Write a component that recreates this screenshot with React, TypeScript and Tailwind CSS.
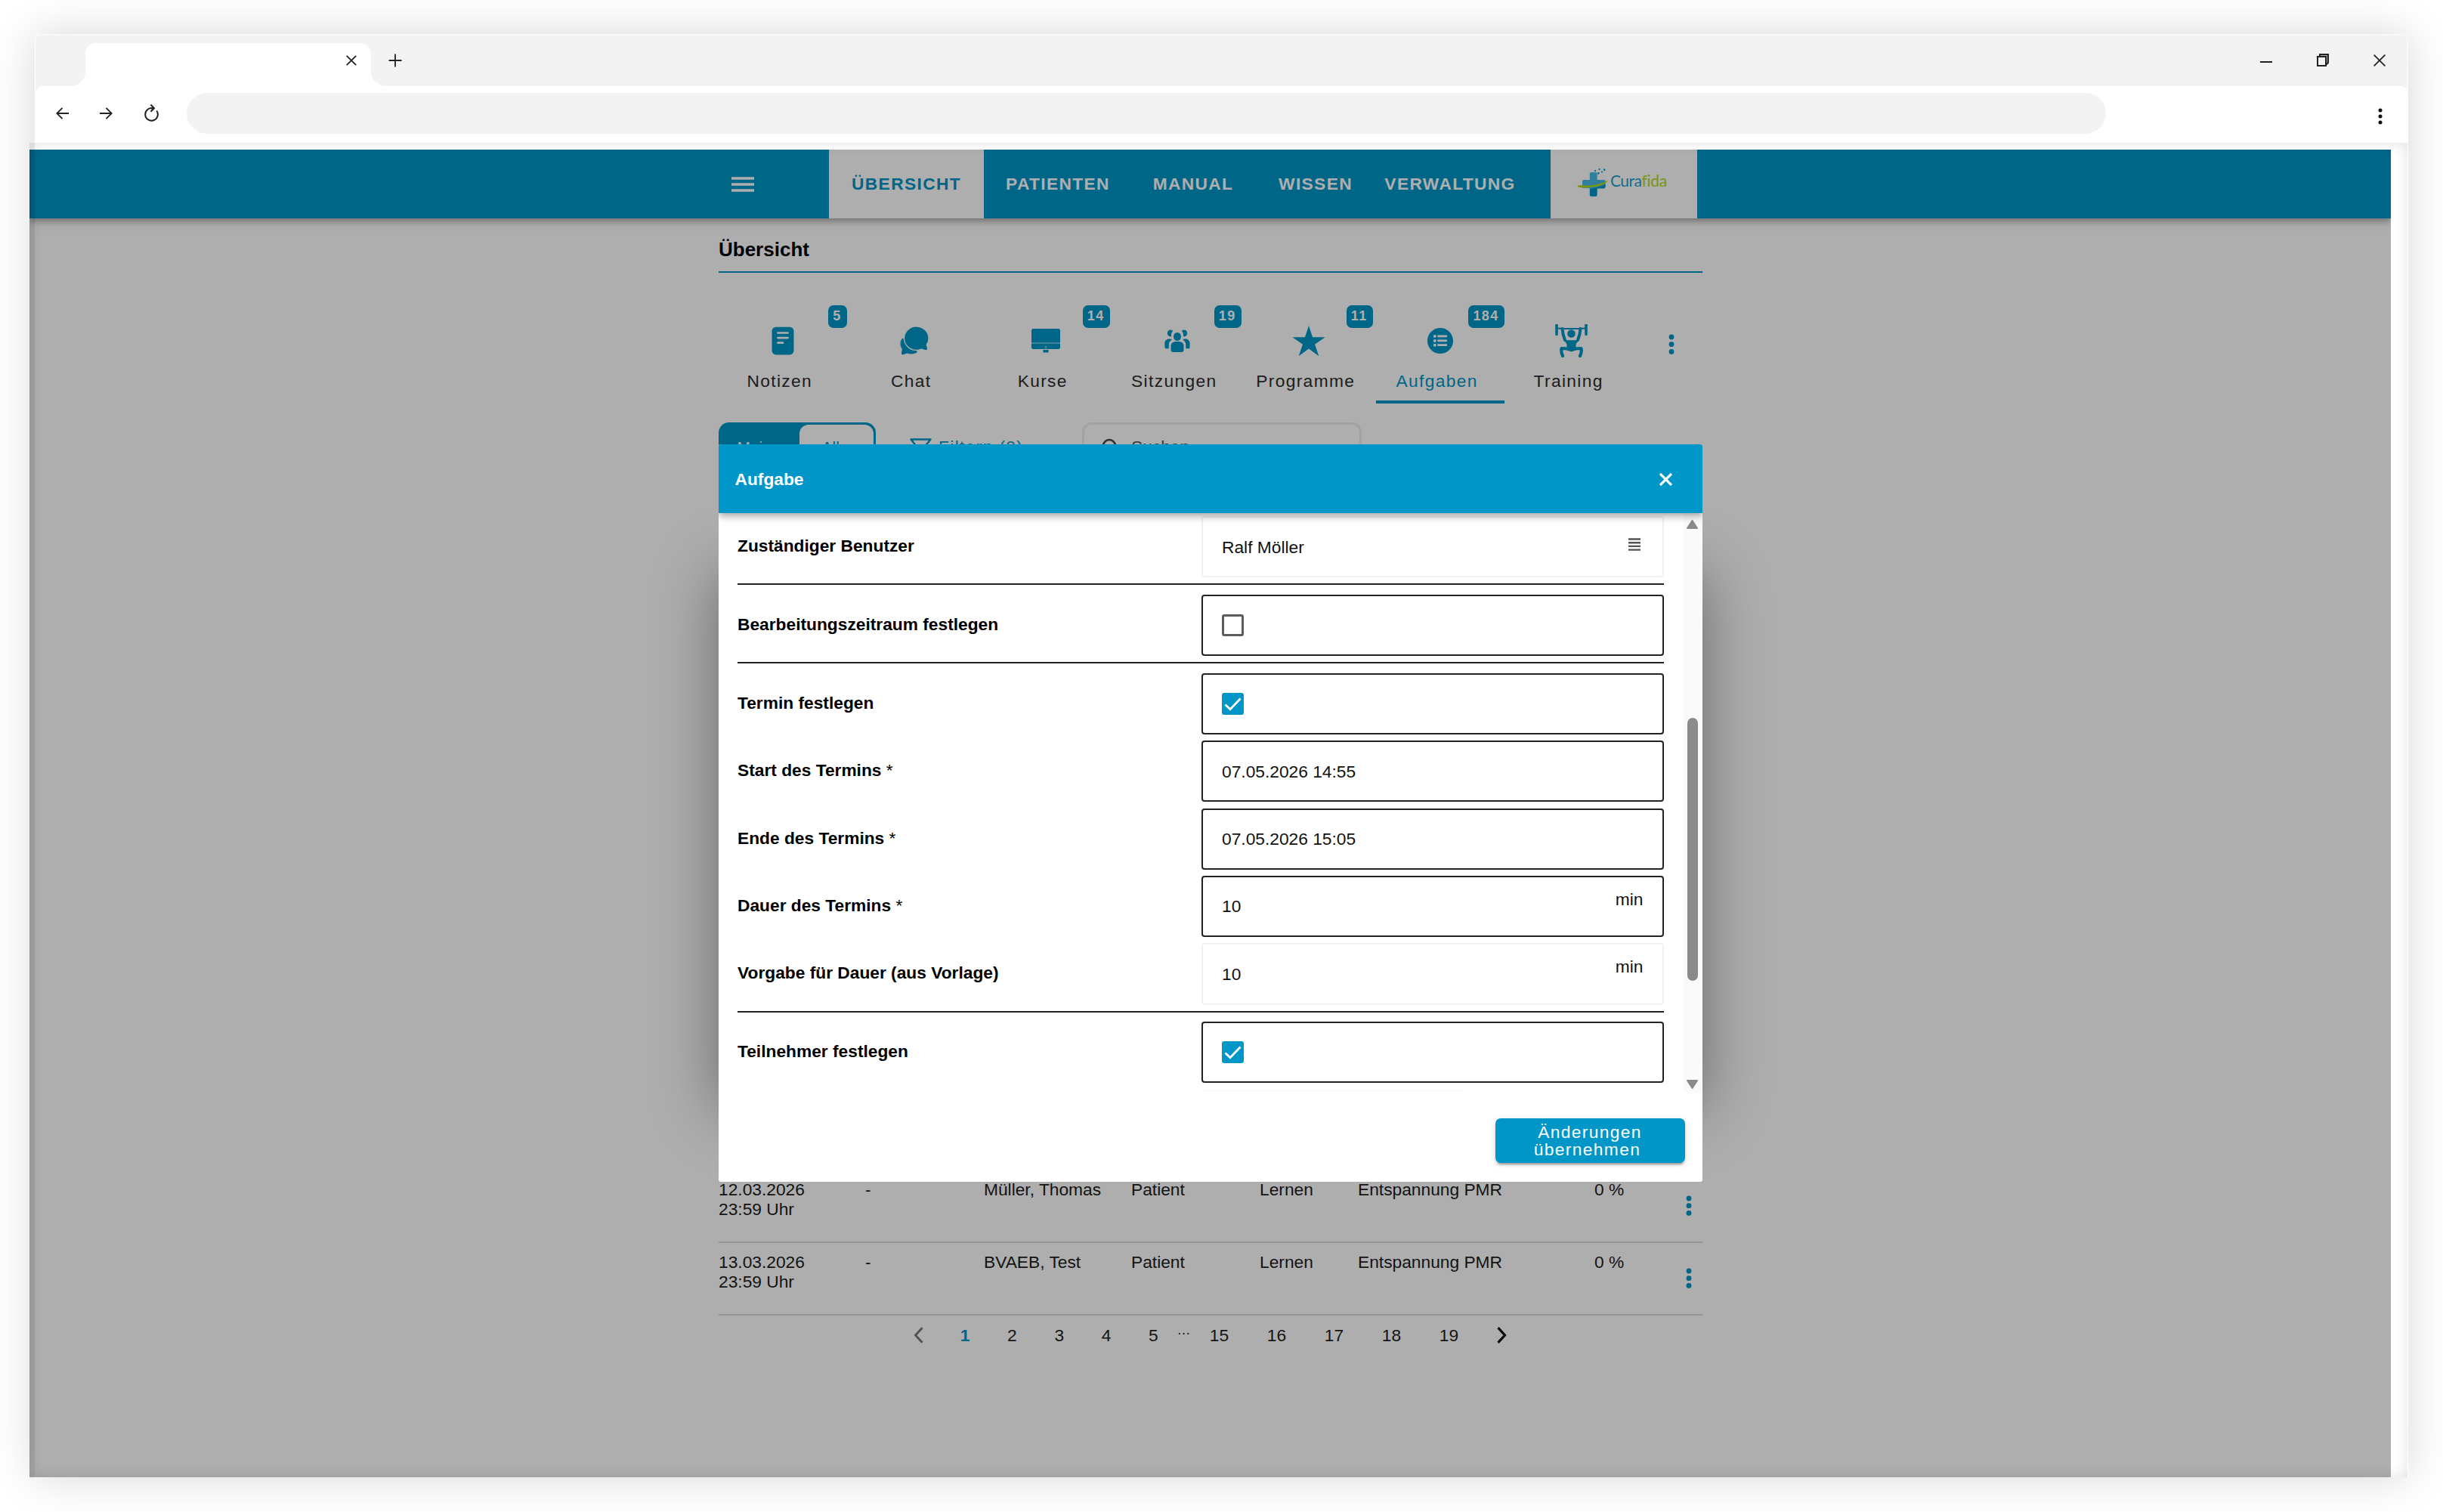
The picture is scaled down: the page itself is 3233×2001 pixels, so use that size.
import type { ReactNode } from "react";
import {
  IoChatbubbles,
  IoListCircle,
  IoReader,
  IoStarSharp,
} from "react-icons/io5";

const navItems = [
  { label: "PATIENTEN", width: "w-[196px]" },
  { label: "MANUAL", width: "w-[162px]" },
  { label: "WISSEN", width: "w-[162px]" },
  { label: "VERWALTUNG", width: "w-[194px]" },
];

const GroupIcon = () => (
  <svg width="34" height="30" viewBox="0 0 34 30" fill="currentColor">
    <ellipse cx="17" cy="9.500" rx="5" ry="5.600" />
    <path d="M8.500 27V22c0-4.500 3.300-6 8.500-6s8.500 1.500 8.500 6v5c0 2-1 3-3 3h-11c-2 0-3-1-3-3z" />
    <path d="M10.500 1.200C8-.6 4 .8 3.800 4.800c0 2.800 1.600 4.600 4 4.600.6 0 1-.2 1.300-.6-.4-3 .3-5.600 2.200-6.900z" />
    <path d="M23.500 1.200c2.500-1.800 6.500-.4 6.700 3.600 0 2.800-1.600 4.600-4 4.600-.6 0-1-.2-1.300-.6.4-3-.3-5.600-2.200-6.900z" />
    <path d="M9.800 13.800C8.500 12 1 11.500.4 18v5.500c0 1.200.7 1.800 1.800 1.800h3.600V20c0-3 1.500-5 4-6.200z" />
    <path d="M24.200 13.800c1.300-1.800 8.800-2.300 9.400 4.200v5.500c0 1.200-.7 1.800-1.800 1.800h-3.600V20c0-3-1.500-5-4-6.200z" />
  </svg>
);

const ScreenIcon = () => (
  <svg width="38" height="32" viewBox="0 0 38 32" fill="currentColor">
    <path d="M2.500 0h33Q38 0 38 2.500V18.500H0V2.500Q0 0 2.500 0z" />
    <path d="M0 18.500h38v1.500H0z" opacity=".6" />
    <path d="M0 20h38v4.500q0 2.500-2.500 2.500h-33Q0 27 0 24.500z" />
    <path d="M15.500 28h7v3.500h-7z" />
    <path d="M18 22.500h2v5h-2z" fill="#fff" opacity=".4" />
  </svg>
);

const LifterIcon = () => (
  <svg width="43" height="44" viewBox="0 0 43 44" fill="none" stroke="currentColor">
    <path d="M2 1v12.500M41 1v12.500" strokeWidth="3.600" strokeLinecap="round" />
    <path d="M3 5.500q18.500 1 37 0" strokeWidth="2" />
    <path d="M9.500 6q.5 8 3.500 15M33.500 6q-.5 8-3.500 15" strokeWidth="4" strokeLinecap="round" />
    <circle cx="21.500" cy="12.500" r="5.300" fill="currentColor" stroke="none" />
    <path d="M11.500 21q10 .5 20 0l-4 5.500V33h-12v-6.500z" fill="currentColor" stroke="none" />
    <path d="M18 32.500l-9.500-.5q-1 5 1.500 10M25 32.500l9.500-.5q1 5-1.500 10" strokeWidth="4.200" strokeLinejoin="round" strokeLinecap="round" />
    <path d="M14 31h15v3l-7.500 2.500L14 34z" fill="currentColor" stroke="none" />
  </svg>
);

const tabs: { label: string; count?: number; icon: ReactNode; active?: boolean }[] = [
  { label: "Notizen", count: 5, icon: <IoReader size={42} /> },
  { label: "Chat", icon: <IoChatbubbles size={42} /> },
  { label: "Kurse", count: 14, icon: <ScreenIcon /> },
  { label: "Sitzungen", count: 19, icon: <GroupIcon /> },
  { label: "Programme", count: 11, icon: <IoStarSharp size={46} /> },
  { label: "Aufgaben", count: 184, icon: <IoListCircle size={42} />, active: true },
  { label: "Training", icon: <LifterIcon /> },
];

const tasks = [
  { date: "12.03.2026", name: "Müller, Thomas" },
  { date: "13.03.2026", name: "BVAEB, Test" },
];

const MoreDots = () => (
  <svg width="8" height="28" viewBox="0 0 8 28" fill="currentColor">
    <circle cx="4" cy="4" r="3.400" />
    <circle cx="4" cy="13.700" r="3.400" />
    <circle cx="4" cy="23.400" r="3.400" />
  </svg>
);

const BrowserBar = () => (
  <div className="ml-2 w-[3140px] bg-[#f3f3f3] rounded-t-[7px]">
    {/* Title bar */}
    <div className="h-[69px] flex items-end justify-between">
      <div className="flex items-end">
        <div className="relative ml-[66px] w-[378px] h-[57px] rounded-t-[14px] bg-white flex items-center justify-end pr-[19px] pb-[11px]">
          <svg className="absolute bottom-0 -left-[18px]" width="18" height="16" fill="#fff"><path d="M18 0C17 7 8 16 0 16h18z" /></svg>
          <svg className="absolute bottom-0 -right-[18px]" width="18" height="16" fill="#fff"><path d="M0 0c1 7 10 16 18 16H0z" /></svg>
          <svg width="14" height="14" viewBox="0 0 14 14" stroke="#222" strokeWidth="1.800"><path d="M.8.8l12.400 12.400M13.200.8L.8 13.200" /></svg>
        </div>
        <svg className="ml-[23px] mb-[25px]" width="18" height="18" viewBox="0 0 18 18" stroke="#222" strokeWidth="1.800"><path d="M9 .5v17M.5 9h17" /></svg>
      </div>
      <div className="flex items-center h-[66px] pr-[30px] gap-[59px] pb-[3px]">
        <svg width="16" height="16" viewBox="0 0 16 16" stroke="#222" strokeWidth="2"><path d="M0 10h16" /></svg>
        <svg width="16" height="17" viewBox="0 0 16 17" fill="none" stroke="#222" strokeWidth="2">
          <path d="M4 4V1h11v11l-3 3" fill="#aaa" />
          <path d="M1 4h11v12H1z" fill="#f3f3f3" />
        </svg>
        <svg width="16" height="16" viewBox="0 0 16 16" stroke="#222" strokeWidth="1.800"><path d="M.6.6l14.800 14.800M15.400.6L.6 15.400" /></svg>
      </div>
    </div>
    {/* Toolbar */}
    <div className="h-[75px] bg-white rounded-t-[10px] flex items-center pb-[3px] pl-[27px] pr-[34px]">
      <svg width="17" height="16" viewBox="0 0 17 16" fill="none" stroke="#222" strokeWidth="1.900"><path d="M17 8H1.500M8.500.8L1.300 8l7.200 7.200" /></svg>
      <svg className="ml-[41px]" width="17" height="16" viewBox="0 0 17 16" fill="none" stroke="#222" strokeWidth="1.900"><path d="M0 8h15.500M8.500.8L15.700 8l-7.200 7.200" /></svg>
      <svg className="ml-[41px] mt-[-3px]" width="20" height="24" viewBox="0 0 20 24" fill="none" stroke="#222" strokeWidth="2"><path d="M17.200 9.500A8.300 8.300 0 1 1 13 6.500h-3M9.500 1.500l4.500 4.800-4.500 4.500" /></svg>
      <div className="ml-[37px] w-[2540px] h-[54px] rounded-full bg-[#f3f3f3]"></div>
      <svg className="ml-auto mt-2" width="6" height="22" viewBox="0 0 6 22" fill="#111">
        <circle cx="3" cy="3" r="2.500" />
        <circle cx="3" cy="11" r="2.500" />
        <circle cx="3" cy="19" r="2.500" />
      </svg>
    </div>
  </div>
);

const Logo = () => (
  <div className="flex items-center">
    <svg width="43" height="46" viewBox="0 0 43 46">
      <path d="M19 9h5.500q2.200 0 2.200 2.200V19h8.800q2.200 0 2.200 2.200V28l-10 2H7V21.200Q7 19 9.200 19h7.600v-7.800Q16.800 9 19 9z" fill="#47bce6" />
      <path d="M12 30.500q14 0 25.500-5.500v3.300q0 2.200-2.200 2.200h-8.600v8.300q0 2.200-2.200 2.200H19q-2.200 0-2.200-2.200v-8.300z" fill="#0096c8" />
      <path d="M1 27q2-1.600 5-.8 18 2.300 36-7-7 8-22 9.300-12 1.600-18 .2-2-.7-1-1.700z" fill="#b6dc10" />
      <path d="M23 6h2v2h-2zM27 9h2.600v2.600H27zM28.500 4h2v2h-2zM32 7.500h2v2h-2zM35 4.500h2.400v2.400H35z" fill="#1f9fcf" />
    </svg>
    <span className="ml-px pb-[5px] font-[Lato,sans-serif] font-normal text-[21px] leading-6 tracking-[-0.5px] text-[#1f9fcf]">Cura</span>
    <span className="pb-[5px] font-[Lato,sans-serif] font-normal text-[21px] leading-6 tracking-[-0.3px] text-[#b2dc10]">fida</span>
  </div>
);

const AppHeader = () => (
  <div className="relative h-[91px] bg-[#0096c8] shadow-[0_3px_7px_-2px_rgba(0,0,0,0.2),0_6px_8px_rgba(0,0,0,0.14),0_2px_16px_rgba(0,0,0,0.12)] flex text-[22.75px] font-bold tracking-[1.36px] text-white">
    <div className="w-[1058px] pl-[929px] flex items-center">
      <svg width="30" height="20" viewBox="0 0 30 20" stroke="#fff" strokeWidth="3.400"><path d="M0 2h30M0 10h30M0 18h30" /></svg>
    </div>
    <div className="w-[205px] bg-white text-[#0096c8] flex items-center justify-center">ÜBERSICHT</div>
    {navItems.map(item => (
      <div key={item.label} className={`${item.width} flex items-center justify-center`}>{item.label}</div>
    ))}
    <div className="ml-9 w-[194px] bg-white flex items-center pl-[35px] pb-1">
      <Logo />
    </div>
  </div>
);

const TabBar = () => (
  <div className="mt-[43px] flex gap-[4.4px] text-[#0096c8]">
    {tabs.map(tab => (
      <div key={tab.label} className={`relative w-[169.6px] h-[130px] pt-[25px] flex flex-col items-center border-b-[4px] ${tab.active ? "border-[#0096c8]" : "border-transparent"}`}>
        {tab.count && (
          <span className="absolute top-0 right-0 h-[30px] pl-[6px] pr-[7px] rounded-[7px] bg-[#0096c8] text-white text-[18px] leading-[28px] font-bold tracking-[1.36px]">{tab.count}</span>
        )}
        <div className="h-11 flex items-center">{tab.icon}</div>
        <span className={`mt-[18px] pr-2 leading-[26px] tracking-[1.36px] ${tab.active ? "text-[#0096c8]" : "text-[#2c2c2c]"}`}>{tab.label}</span>
      </div>
    ))}
    <div className="w-[82px] pt-[38px] pl-1 flex justify-center">
      <MoreDots />
    </div>
  </div>
);

const FilterBar = () => (
  <div className="mt-[25px] flex h-[65px] text-[#0096c8]">
    <div className="w-[208px] rounded-[14px] bg-[#0096c8] p-[3px] flex text-[21px]">
      <div className="w-[104px] flex items-center justify-center pr-1 text-white">Meine</div>
      <div className="flex-1 rounded-[12px] bg-white flex items-center justify-center pr-1">Alle</div>
    </div>
    <div className="ml-[45px] w-[228px] flex items-center gap-[9px] tracking-[1.36px]">
      <svg className="mt-1" width="29" height="27" viewBox="0 0 29 27" fill="none" stroke="currentColor" strokeWidth="2.500" strokeLinejoin="round"><path d="M1.500 1.500h26L17.500 14v11l-6-3v-8z" /></svg>
      <span>Filtern (0)</span>
    </div>
    <div className="w-[370px] rounded-[13px] border-[3px] border-[#ededed] flex items-center pl-[23px] text-[#555]">
      <svg width="26" height="26" viewBox="0 0 26 26" fill="none" stroke="#444" strokeWidth="2.600"><circle cx="10" cy="11" r="8" /><path d="M16 17l8 8" /></svg>
      <span className="ml-[13px]">Suchen</span>
    </div>
  </div>
);

const Pagination = () => (
  <div className="h-[52px] pl-[233px] flex items-center text-[#222]">
    <span className="w-[62px] flex justify-center"><svg width="13" height="22" viewBox="0 0 13 22" fill="none" stroke="#777" strokeWidth="2.800"><path d="M11.500 1.200L2.500 11l9 9.800" /></svg></span>
    <span className="w-[62.3px] text-center font-bold text-[#0096c8]">1</span>
    {[2, 3, 4, 5].map(page => (
      <span key={page} className="w-[62.3px] text-center">{page}</span>
    ))}
    <span className="w-[18px] text-center text-[18px] leading-[26px] pb-[14px]">…</span>
    {[15, 16, 17, 18, 19].map(page => (
      <span key={page} className="w-[76px] text-center">{page}</span>
    ))}
    <span className="w-[65px] flex justify-center"><svg width="13" height="22" viewBox="0 0 13 22" fill="none" stroke="#111" strokeWidth="3.200"><path d="M1.500 1.200l9 9.800-9 9.800" /></svg></span>
  </div>
);

const Overview = () => (
  <div className="ml-[912px] w-[1301.5px]">
    <h1 className="pt-[21px] pb-[9px] text-[26px] leading-10 font-bold text-black border-b-2 border-[#0096c8]">Übersicht</h1>
    <TabBar />
    <FilterBar />
    <div className="mt-[925px] text-[#1d1d1d] leading-[26px]">
      {tasks.map(task => (
        <div key={task.date} className="h-24 pt-3 border-b-2 border-[#dadada] grid grid-cols-[194px_157px_195px_170px_130px_313px_1fr] items-start">
          <span>{task.date}<br />23:59 Uhr</span>
          <span>-</span>
          <span>{task.name}</span>
          <span>Patient</span>
          <span>Lernen</span>
          <span>Entspannung PMR</span>
          <div className="flex justify-between pr-[14px]">
            <span>0 %</span>
            <span className="pt-[21px] text-[#0096c8]"><MoreDots /></span>
          </div>
        </div>
      ))}
    </div>
    <Pagination />
  </div>
);

interface RowProps {
  label: string;
  required?: boolean;
  readOnly?: boolean;
  checked?: boolean;
  value?: string;
  unit?: string;
  divider?: boolean;
  list?: boolean;
}

const rows: RowProps[] = [
  { label: "Zuständiger Benutzer", value: "Ralf Möller", readOnly: true, list: true, divider: true },
  { label: "Bearbeitungszeitraum festlegen", checked: false, divider: true },
  { label: "Termin festlegen", checked: true },
  { label: "Start des Termins", required: true, value: "07.05.2026 14:55" },
  { label: "Ende des Termins", required: true, value: "07.05.2026 15:05" },
  { label: "Dauer des Termins", required: true, value: "10", unit: "min" },
  { label: "Vorgabe für Dauer (aus Vorlage)", value: "10", unit: "min", readOnly: true, divider: true },
  { label: "Teilnehmer festlegen", checked: true },
];

const Checkbox = ({ checked }: { checked: boolean }) =>
  checked ? (
    <div className="w-[29px] h-[29px] rounded-[3px] bg-[#0096c8] flex items-center justify-center">
      <svg width="23" height="18" viewBox="0 0 23 18" fill="none" stroke="#fff" strokeWidth="2.800"><path d="M1.500 9.500l6.500 6.300L21.500 1.500" /></svg>
    </div>
  ) : (
    <div className="w-[29px] h-[29px] rounded-[3px] border-[3px] border-[#5c5c5c]"></div>
  );

const FormRow = ({ label, required, readOnly, checked, value, unit, divider, list }: RowProps) => (
  <>
    <div className="h-[81.25px] mb-[8.1px] grid grid-cols-[614px_612px]">
      <div className="flex items-center pb-[3px] pl-[0.5px] font-bold text-black whitespace-pre">
        {label}{required && <span className="font-normal"> *</span>}
      </div>
      <div className={`border-2 rounded-[4px] pl-[25.5px] pr-[25px] flex justify-between ${readOnly ? "border-[#f1f1f1]" : "border-[#222]"}`}>
        <div className="flex items-center">
          {checked !== undefined ? <Checkbox checked={checked} /> : <span>{value}</span>}
        </div>
        {unit && <span className="mt-[13px] leading-8">{unit}</span>}
        {list && (
          <svg className="mt-[27px] mr-1" width="16" height="17" viewBox="0 0 16 17" stroke="#555" strokeWidth="2.400"><path d="M0 1.500h16M0 6.200h16M0 10.900h16M0 15.600h16" /></svg>
        )}
      </div>
    </div>
    {divider && <div className="h-[2px] mb-[12.6px] bg-[#222]"></div>}
  </>
);

const TaskModal = () => (
  <div className="absolute left-[911.5px] top-[390px] w-[1302px] h-[976px]">
    {/* Soft shadow to both sides of the dialog */}
    <div className="absolute inset-x-0 top-[170px] bottom-[95px] shadow-[0_0_78px_rgba(0,0,0,0.4)]"></div>
    <div className="relative h-full bg-white rounded-[3px] overflow-hidden flex flex-col text-[#111]">
      <div className="relative z-10 h-[91px] shrink-0 pl-[22px] pr-10 bg-[#0096c8] text-white flex items-center justify-between shadow-[0_3px_7px_-2px_rgba(0,0,0,0.2),0_6px_8px_rgba(0,0,0,0.14),0_2px_16px_rgba(0,0,0,0.12)]">
        <span className="pt-px font-bold">Aufgabe</span>
        <svg className="mt-px" width="17" height="17" viewBox="0 0 17 17" stroke="#fff" strokeWidth="3.200"><path d="M1 1l15 15M16 1L1 16" /></svg>
      </div>

      <div className="h-[767px] shrink-0 flex overflow-hidden">
        <div className="w-[1277px] pl-[25px] pr-[26px] pt-1">
          {rows.map(row => (
            <FormRow key={row.label} {...row} />
          ))}
          <div className="ml-[614px] mt-[3px] w-[346px] h-[2px] bg-[#fafafa]"></div>
        </div>
        <div className="flex-1 bg-[#fafafa] flex flex-col items-center pt-[9px] pb-[5px] pr-px">
          <svg width="15" height="12" viewBox="0 0 15 12" fill="#8b8b8b" stroke="#8b8b8b" strokeWidth="2" strokeLinejoin="round"><path d="M7.500 1L14 11H1z" /></svg>
          <div className="mt-[250px] w-[14px] h-[348px] rounded-full bg-[#8b8b8b]"></div>
          <svg className="mt-auto" width="15" height="12" viewBox="0 0 15 12" fill="#8b8b8b" stroke="#8b8b8b" strokeWidth="2" strokeLinejoin="round"><path d="M7.500 11L14 1H1z" /></svg>
        </div>
      </div>

      <div className="flex justify-end pt-[34px] pr-[23px]">
        <button className="w-[251px] h-[59px] rounded-[7px] bg-[#0096c8] text-white leading-[23px] tracking-[1.36px] shadow-[0_5px_2px_-3px_rgba(0,0,0,0.2),0_3px_3px_rgba(0,0,0,0.14),0_2px_8px_rgba(0,0,0,0.12)]">
          <span className="block">Änderungen</span>
          <span className="block pr-[7px]">übernehmen</span>
        </button>
      </div>
    </div>
  </div>
);

export default function App() {
  return (
    <div className="relative w-[3233px] h-[2001px] bg-white overflow-hidden pl-[39px] pt-[45px] font-['Liberation_Sans',Arial,sans-serif] text-[22.75px]">
      <BrowserBar />
      <div className="relative mt-[9px] w-[3125px] h-[1757px] bg-white overflow-hidden">
        <AppHeader />
        <Overview />
        <div className="absolute inset-0 bg-black/[0.318]"></div>
        <TaskModal />
      </div>
      {/* Window frame with its glow */}
      <div className="absolute left-[46px] top-[45px] w-[3141px] h-[1910px] rounded-t-[7px] border-2 border-b-0 border-l-0 border-white/40 pointer-events-none shadow-[0_0_60px_rgba(0,0,0,0.16)]"></div>
      <div className="absolute left-[39px] top-[189px] w-[3147px] h-[1766px] pointer-events-none shadow-[inset_0_0_18px_rgba(0,0,0,0.12)]"></div>
    </div>
  );
}
